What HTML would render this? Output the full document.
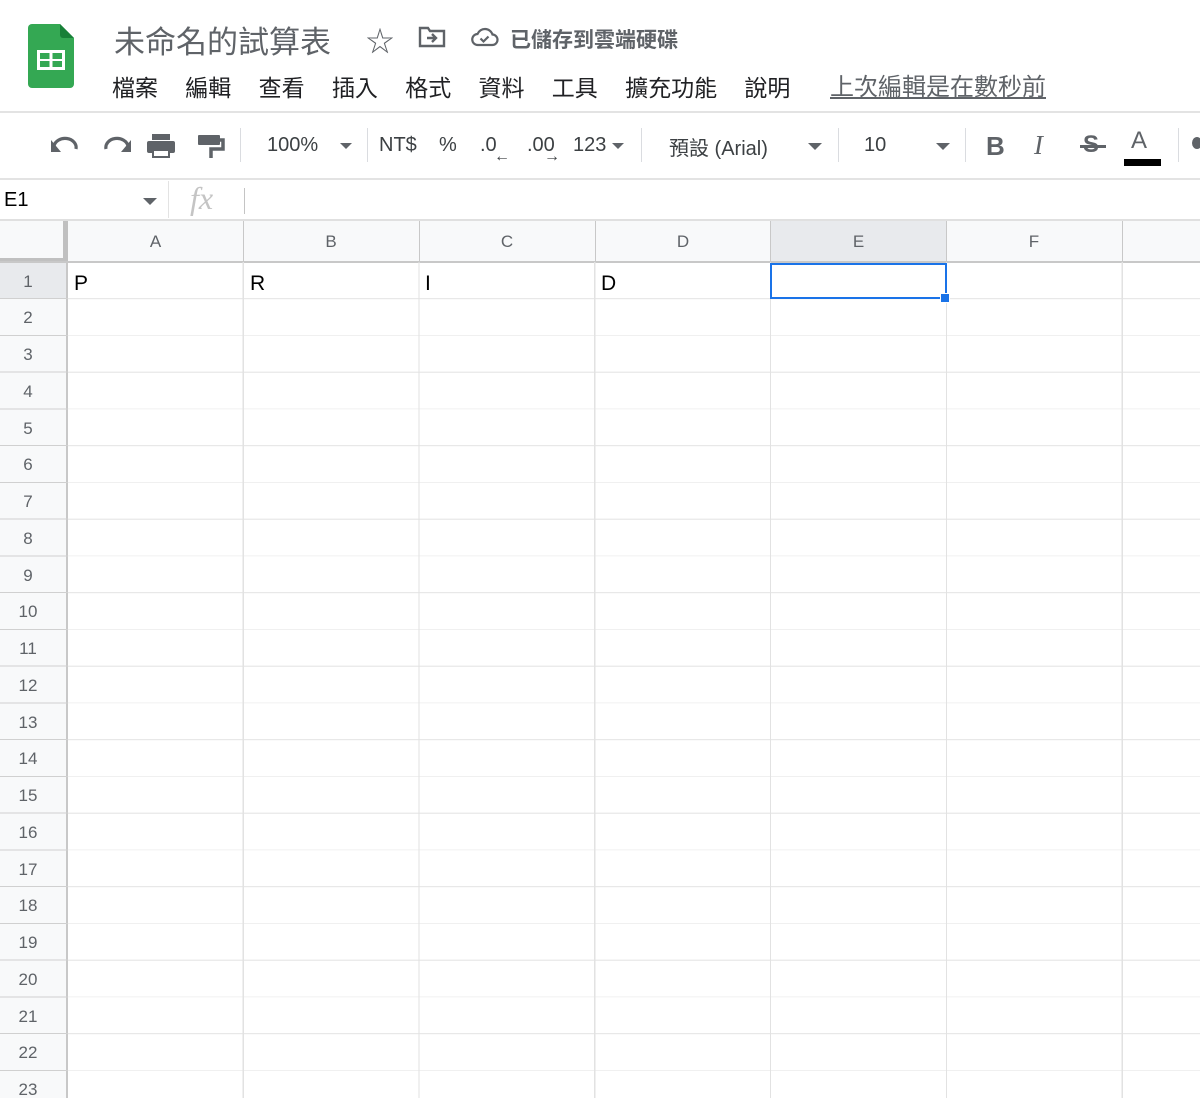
<!DOCTYPE html>
<html><head><meta charset="utf-8"><style>
*{margin:0;padding:0;box-sizing:border-box}
body{width:1200px;height:1098px;overflow:hidden;background:#fff;font-family:"Liberation Sans","Noto Sans CJK TC",sans-serif;position:relative;color:#202124}
.a{position:absolute;white-space:nowrap}
.menu span{margin-right:27.3px}
.tb{color:#3c4043;font-size:20px}
.sep{position:absolute;width:1px;background:#dadce0}
.rn{position:absolute;left:0;width:56px;text-align:center;font-size:17px;color:#5f6368}
.ch{position:absolute;top:221px;height:41px;line-height:41px;text-align:center;font-size:17px;color:#5f6368}
</style></head><body>
<svg class="a" style="left:28px;top:24px" width="46" height="64" viewBox="0 0 46 64">
<path d="M4 0H32L46 14V60a4 4 0 0 1-4 4H4a4 4 0 0 1-4-4V4a4 4 0 0 1 4-4z" fill="#34a853"/>
<path d="M32 0L46 14H35a3 3 0 0 1-3-3z" fill="#188038"/>
<rect x="9" y="26" width="28" height="20" fill="#fff"/>
<rect x="12" y="29" width="9.5" height="6" fill="#34a853"/><rect x="24.5" y="29" width="9.5" height="6" fill="#34a853"/>
<rect x="12" y="37" width="9.5" height="6" fill="#34a853"/><rect x="24.5" y="37" width="9.5" height="6" fill="#34a853"/>
</svg>
<div class="a" style="left:114px;top:17px;font-size:31px;color:#5f6368">未命名的試算表</div>
<div class="a" style="left:366px;top:20px;font-size:28px;color:#5f6368">☆</div>
<svg class="a" style="left:418px;top:26px" width="28" height="22" viewBox="0 0 28 22"><path d="M2 2h8l2 3h14v15H2z" fill="none" stroke="#5f6368" stroke-width="2.4"/><path d="M9 12h9M14 8l4 4-4 4" fill="none" stroke="#5f6368" stroke-width="2.4"/></svg>
<svg class="a" style="left:471px;top:27px" width="28" height="20" viewBox="0 0 28 20"><path d="M7 18a5.5 5.5 0 0 1-.5-11A8 8 0 0 1 21.5 7.5 5 5 0 0 1 21 18z" fill="none" stroke="#5f6368" stroke-width="2.2"/><path d="M9.5 11.5l3 3 5-5" fill="none" stroke="#5f6368" stroke-width="2.2"/></svg>
<div class="a" style="left:510px;top:24px;font-size:21px;color:#5f6368;font-weight:bold">已儲存到雲端硬碟</div>
<div class="a menu" style="left:112px;top:69px;font-size:23px;color:#202124"><span>檔案</span><span>編輯</span><span>查看</span><span>插入</span><span>格式</span><span>資料</span><span>工具</span><span>擴充功能</span><span>說明</span></div>
<div class="a" style="left:830px;top:67px;font-size:24px;color:#5f6368;text-decoration:underline">上次編輯是在數秒前</div>
<div class="a" style="left:0;top:111px;width:1200px;height:2px;background:#e3e3e3"></div>
<svg class="a" style="left:48px;top:132px" width="200" height="28" viewBox="0 0 200 28">
<path d="M6 14a11 9 0 0 1 22 3" fill="none" stroke="#5f6368" stroke-width="3.2"/><path d="M3 8v12h10z" fill="#5f6368"/>
<path d="M80 14a11 9 0 0 0-22 3" fill="none" stroke="#5f6368" stroke-width="3.2"/><path d="M83 8v12h-10z" fill="#5f6368"/>
<rect x="104" y="2" width="18" height="6" fill="#5f6368"/><rect x="99" y="9" width="28" height="12" rx="2" fill="#5f6368"/><rect x="104" y="17" width="18" height="9" fill="#5f6368"/><rect x="106" y="19" width="14" height="5" fill="#fff"/>
<rect x="150" y="3" width="22" height="10" rx="1" fill="#5f6368"/><path d="M172 8h3v9h-12v9" fill="none" stroke="#5f6368" stroke-width="3.5"/>
</svg>
<div class="sep" style="left:240px;top:128px;height:34px"></div>
<div class="a tb" style="left:267px;top:134px">100%</div>
<div class="a" style="left:340px;top:143px;border:6px solid transparent;border-top:6px solid #5f6368"></div>
<div class="sep" style="left:367px;top:128px;height:34px"></div>
<div class="a tb" style="left:379px;top:134px">NT$</div>
<div class="a tb" style="left:439px;top:134px">%</div>
<div class="a tb" style="left:480px;top:134px">.0</div>
<div class="a" style="left:494px;top:148px;font-size:16px;color:#3c4043;font-weight:bold">←</div>
<div class="a tb" style="left:527px;top:134px">.00</div>
<div class="a" style="left:544px;top:148px;font-size:16px;color:#3c4043;font-weight:bold">→</div>
<div class="a tb" style="left:573px;top:134px">123</div>
<div class="a" style="left:612px;top:143px;border:6px solid transparent;border-top:6px solid #5f6368"></div>
<div class="sep" style="left:641px;top:128px;height:34px"></div>
<div class="a tb" style="left:669px;top:132px">預設 (Arial)</div>
<div class="a" style="left:808px;top:143px;border:7px solid transparent;border-top:7px solid #5f6368"></div>
<div class="sep" style="left:838px;top:128px;height:34px"></div>
<div class="a tb" style="left:864px;top:134px">10</div>
<div class="a" style="left:936px;top:143px;border:7px solid transparent;border-top:7px solid #5f6368"></div>
<div class="sep" style="left:965px;top:128px;height:34px"></div>
<div class="a" style="left:986px;top:131px;font-size:26px;font-weight:bold;color:#5f6368">B</div>
<div class="a" style="left:1034px;top:130px;font-size:27px;font-style:italic;font-family:'Liberation Serif',serif;color:#5f6368">I</div>
<div class="a" style="left:1083px;top:131px;font-size:24px;color:#5f6368;font-weight:bold">S</div>
<div class="a" style="left:1080px;top:145px;width:26px;height:3px;background:#5f6368"></div>
<div class="a" style="left:1131px;top:127px;font-size:24px;color:#5f6368">A</div>
<div class="a" style="left:1124px;top:159px;width:37px;height:7px;background:#000"></div>
<div class="sep" style="left:1178px;top:128px;height:34px"></div>
<div class="a" style="left:1192px;top:137px;width:10px;height:12px;border-radius:50%;background:#5f6368"></div>
<div class="a" style="left:0;top:178px;width:1200px;height:2px;background:#e3e3e3"></div>
<div class="a" style="left:4px;top:189px;font-size:20px;color:#000">E1</div>
<div class="a" style="left:143px;top:198px;border:7px solid transparent;border-top:7px solid #5f6368"></div>
<div class="sep" style="left:168px;top:181px;height:37px;background:#e3e3e3"></div>
<div class="a" style="left:190px;top:180px;font-size:32px;font-style:italic;font-family:'Liberation Serif',serif;color:#c4c4c4">fx</div>
<div class="sep" style="left:244px;top:188px;height:26px;background:#c4c4c4"></div>
<div class="a" style="left:0;top:219px;width:1200px;height:2px;background:#e0e0e0"></div>
<div class="a" style="left:0;top:221px;width:1200px;height:41px;background:#f8f9fa"></div>
<div class="a" style="left:0;top:262px;width:68px;height:836px;background:#f8f9fa"></div>
<div class="a" style="left:771px;top:221px;width:175px;height:41px;background:#e8eaed"></div>
<div class="a" style="left:0;top:262px;width:68px;height:37px;background:#e8eaed"></div>
<div class="a" style="left:63px;top:221px;width:5px;height:41px;background:#c0c0c0"></div>
<div class="a" style="left:0;top:258px;width:68px;height:4px;background:#c0c0c0"></div>
<div class="a" style="left:0;top:261px;width:1200px;height:2px;background:#c8c8c8"></div>
<div class="a" style="left:66px;top:262px;width:2px;height:836px;background:#c8c8c8"></div>
<div class="a" style="left:68px;top:262px;width:1132px;height:836px;background:repeating-linear-gradient(to bottom,transparent 0,transparent 36px,#e2e2e2 36px,#e2e2e2 36.76px),repeating-linear-gradient(to right,transparent 0,transparent 174.6px,#e2e2e2 174.6px,#e2e2e2 175.8px);background-position:0 0.2px,0 0"></div>
<div class="a" style="left:0;top:298px;width:68px;height:800px;background:repeating-linear-gradient(to bottom,#d0d0d0 0,#d0d0d0 1px,transparent 1px,transparent 36.76px)"></div>
<div class="a" style="left:243px;top:221px;width:1px;height:41px;background:#c8c8c8"></div>
<div class="a" style="left:419px;top:221px;width:1px;height:41px;background:#c8c8c8"></div>
<div class="a" style="left:595px;top:221px;width:1px;height:41px;background:#c8c8c8"></div>
<div class="a" style="left:770px;top:221px;width:1px;height:41px;background:#c8c8c8"></div>
<div class="a" style="left:946px;top:221px;width:1px;height:41px;background:#c8c8c8"></div>
<div class="a" style="left:1122px;top:221px;width:1px;height:41px;background:#c8c8c8"></div>
<div class="ch" style="left:68px;width:175px">A</div>
<div class="ch" style="left:243px;width:176px">B</div>
<div class="ch" style="left:419px;width:176px">C</div>
<div class="ch" style="left:595px;width:176px">D</div>
<div class="ch" style="left:771px;width:175px">E</div>
<div class="ch" style="left:946px;width:176px">F</div>
<div class="rn" style="top:272px">1</div><div class="rn" style="top:308px">2</div><div class="rn" style="top:345px">3</div><div class="rn" style="top:382px">4</div><div class="rn" style="top:419px">5</div><div class="rn" style="top:455px">6</div><div class="rn" style="top:492px">7</div><div class="rn" style="top:529px">8</div><div class="rn" style="top:566px">9</div><div class="rn" style="top:602px">10</div><div class="rn" style="top:639px">11</div><div class="rn" style="top:676px">12</div><div class="rn" style="top:713px">13</div><div class="rn" style="top:749px">14</div><div class="rn" style="top:786px">15</div><div class="rn" style="top:823px">16</div><div class="rn" style="top:860px">17</div><div class="rn" style="top:896px">18</div><div class="rn" style="top:933px">19</div><div class="rn" style="top:970px">20</div><div class="rn" style="top:1007px">21</div><div class="rn" style="top:1043px">22</div><div class="rn" style="top:1080px">23</div>
<div class="a" style="left:74px;top:272px;font-size:21px;color:#000">P</div>
<div class="a" style="left:250px;top:272px;font-size:21px;color:#000">R</div>
<div class="a" style="left:425px;top:272px;font-size:21px;color:#000">I</div>
<div class="a" style="left:601px;top:272px;font-size:21px;color:#000">D</div>
<div class="a" style="left:770px;top:263px;width:177px;height:36px;border:2px solid #1a73e8"></div>
<div class="a" style="left:940px;top:293px;width:10px;height:10px;background:#1a73e8;border:1px solid #fff"></div>
</body></html>
